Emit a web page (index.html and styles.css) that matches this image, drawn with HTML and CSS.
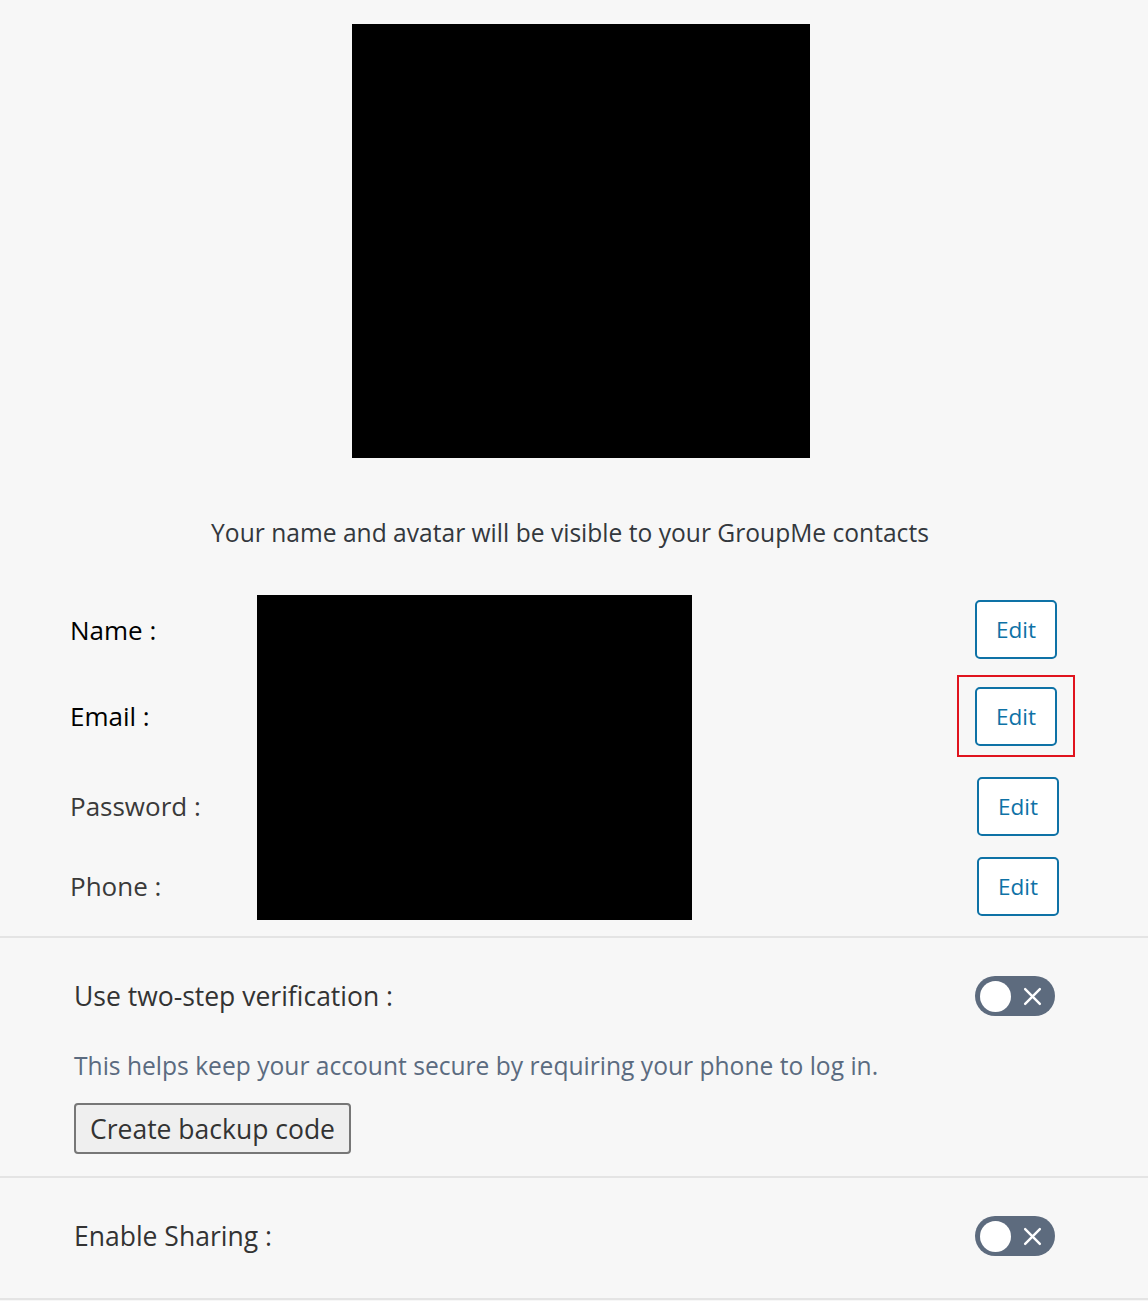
FILE: index.html
```html
<!DOCTYPE html>
<html>
<head>
<meta charset="utf-8">
<link rel="stylesheet" href="styles.css">
</head>
<body>
<div class="page">
  <div class="avatar-area">
    <div class="avatar"></div>
  </div>
  <p class="notice">Your name and avatar will be visible to your GroupMe contacts</p>

  <div class="fields">
    <div class="label label-dark r1">Name :</div>
    <div class="label label-dark r2">Email :</div>
    <div class="label r3">Password :</div>
    <div class="label r4">Phone :</div>
    <div class="values"></div>
    <div class="action r1"><button class="edit">Edit</button></div>
    <div class="action r2"><span class="highlight"><button class="edit">Edit</button></span></div>
    <div class="action r3 shifted"><button class="edit">Edit</button></div>
    <div class="action r4 shifted"><button class="edit">Edit</button></div>
  </div>

  <section class="setting two-step">
    <div class="setting-row">
      <span class="setting-label">Use two-step verification :</span>
      <span class="toggle"><span class="knob"></span><svg class="x" viewBox="0 0 20 20" width="21" height="21"><path d="M3 3 L17 17 M17 3 L3 17" stroke="#fff" stroke-width="2.3" stroke-linecap="round"/></svg></span>
    </div>
    <p class="help">This helps keep your account secure by requiring your phone to log in.</p>
    <button class="backup">Create backup code</button>
  </section>

  <section class="setting sharing">
    <div class="setting-row">
      <span class="setting-label">Enable Sharing :</span>
      <span class="toggle"><span class="knob"></span><svg class="x" viewBox="0 0 20 20" width="21" height="21"><path d="M3 3 L17 17 M17 3 L3 17" stroke="#fff" stroke-width="2.3" stroke-linecap="round"/></svg></span>
    </div>
  </section>
</div>
</body>
</html>
```

FILE: styles.css
```css
html, body {
  margin: 0;
  padding: 0;
  background: #f7f7f7;
}
body {
  font-family: "Open Sans", "Noto Sans", sans-serif;
  color: #333;
}
.page {
  width: 1148px;
}
.avatar-area {
  padding-top: 24px;
  padding-left: 352px;
}
.avatar {
  width: 458px;
  height: 434px;
  background: #000;
}
.notice {
  margin: 59px 0 0 0;
  padding-right: 8px;
  text-align: center;
  font-size: 24.6px;
  line-height: 32px;
  color: #33383d;
}
.fields {
  margin-top: 46px;
  display: grid;
  grid-template-columns: 257px 700px 191px;
  grid-template-rows: 69px 104px 76px 84px;
}
.label {
  grid-column: 1;
  align-self: center;
  padding-left: 70px;
  font-size: 26px;
  line-height: 34px;
  color: #3a3a3a;
}
.label-dark { color: #000; }
.r1 { grid-row: 1; }
.r2 { grid-row: 2; }
.r3 { grid-row: 3; }
.r4 { grid-row: 4; }
.values {
  grid-column: 2;
  grid-row: 1 / 5;
  align-self: start;
  width: 435px;
  height: 325px;
  background: #000;
}
.action {
  grid-column: 3;
  align-self: center;
  padding-left: 18px;
  display: flex;
}
.action.r2 { padding-left: 0; }
.action.shifted { padding-left: 20px; }
.highlight {
  display: inline-flex;
  border: 2px solid #e0141e;
  padding: 10px 16px 9px 16px;
}
.edit {
  width: 82px;
  height: 59px;
  box-sizing: border-box;
  border: 2px solid #0e72a6;
  border-radius: 5px;
  background: #fff;
  color: #0e72a6;
  font-family: "Open Sans", "Noto Sans", sans-serif;
  font-size: 22.5px;
  padding: 0;
}
.setting {
  border-top: 2px solid #e4e4e4;
  padding-left: 74px;
  padding-right: 93px;
}
.two-step {
  margin-top: 8px;
  padding-top: 38px;
  padding-bottom: 22px;
}
.setting-row {
  display: flex;
  justify-content: space-between;
  align-items: center;
  height: 40px;
}
.setting-label {
  font-size: 26.5px;
  color: #333;
}
.toggle {
  width: 80px;
  height: 40px;
  border-radius: 20px;
  background: #5d6b7e;
  display: flex;
  align-items: center;
  box-sizing: border-box;
  padding: 0 5px;
  justify-content: space-between;
}
.knob {
  width: 31px;
  height: 31px;
  border-radius: 50%;
  background: #fff;
}
.x { margin-right: 7px; }
.help {
  margin: 34px 0 0 0;
  font-size: 24.6px;
  line-height: 32px;
  color: #5b6b80;
}
.backup {
  display: block;
  margin-top: 21px;
  width: 277px;
  height: 51px;
  border: 2px solid #777;
  border-radius: 4px;
  background: #efefef;
  color: #333;
  font-family: "Open Sans", "Noto Sans", sans-serif;
  font-size: 26.5px;
  padding: 0;
}
.sharing {
  padding-top: 38px;
  padding-bottom: 42px;
  border-bottom: 2px solid #e4e4e4;
}
```
